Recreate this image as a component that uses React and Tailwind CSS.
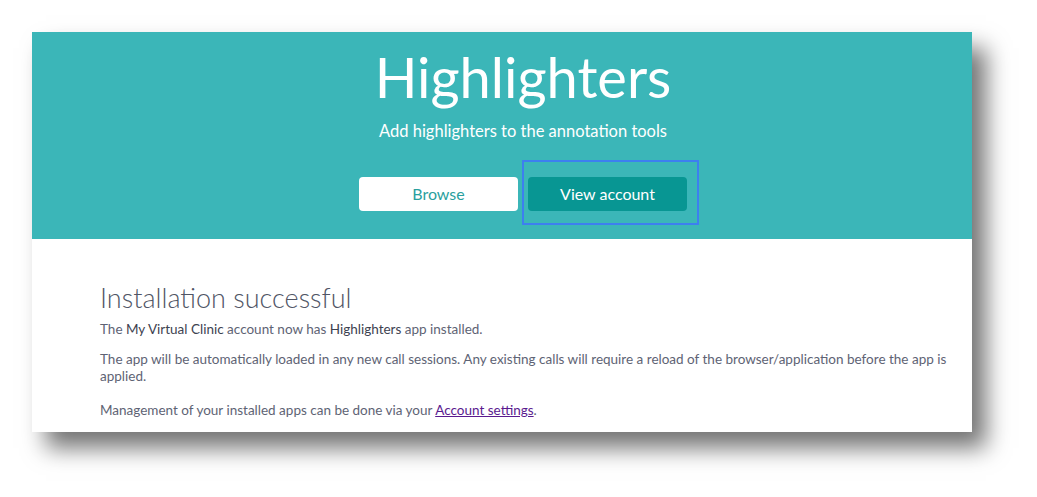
import React from 'react';

function App() {
    return (
        <div className="w-[1037px] h-[497px] bg-white pt-[32px] pl-[32px]" style={{ fontFamily: 'Lato, "Open Sans", sans-serif' }}>
            <div className="w-[940px] h-[400px] bg-white shadow-[14px_16px_22px_rgba(0,0,0,0.55)] flex flex-col">
                {/* Header */}
                <div className="h-[207px] bg-[#3bb6b8] flex flex-col items-center pl-[42px]">
                    <h1 className="mt-[8px] text-[56px] leading-[74px] font-normal text-white">Highlighters</h1>
                    <p className="mt-[6px] text-[16.5px] leading-[22px] text-white font-normal">Add highlighters to the annotation tools</p>
                    <div className="mt-[35px] flex items-center gap-[10px]">
                        <button className="w-[159px] h-[34px] bg-white rounded-[4px] text-[16px] text-[#2a9f9e]">Browse</button>
                        <div className="relative">
                            <button className="w-[159px] h-[34px] bg-[#089693] rounded-[4px] text-[16px] text-white">View account</button>
                            <div className="absolute -left-[6px] -right-[12px] -top-[17px] -bottom-[14px] border-2 border-[#3d7ff0]"></div>
                        </div>
                    </div>
                </div>
                {/* Body */}
                <div className="pl-[68px] pr-[14px] pt-[43px] text-[#5e6374]">
                    <h2 className="text-[27px] leading-[32px] font-light text-[#505565]">Installation successful</h2>
                    <p className="mt-[6px] text-[13.5px] leading-[18px]">
                        The <span className="text-[#3d4250]">My Virtual Clinic</span> account now has <span className="text-[#3d4250]">Highlighters</span> app installed.
                    </p>
                    <p className="mt-[13px] text-[13.5px] leading-[17px]">
                        The app will be automatically loaded in any new call sessions. Any existing calls will require a reload of the browser/application before the app is applied.
                    </p>
                    <p className="mt-[16px] text-[13.5px] leading-[18px]">
                        Management of your installed apps can be done via your <a href="#" className="text-[#5a1a8f] underline">Account settings</a>.
                    </p>
                </div>
            </div>
        </div>
    );
}

export default App;
